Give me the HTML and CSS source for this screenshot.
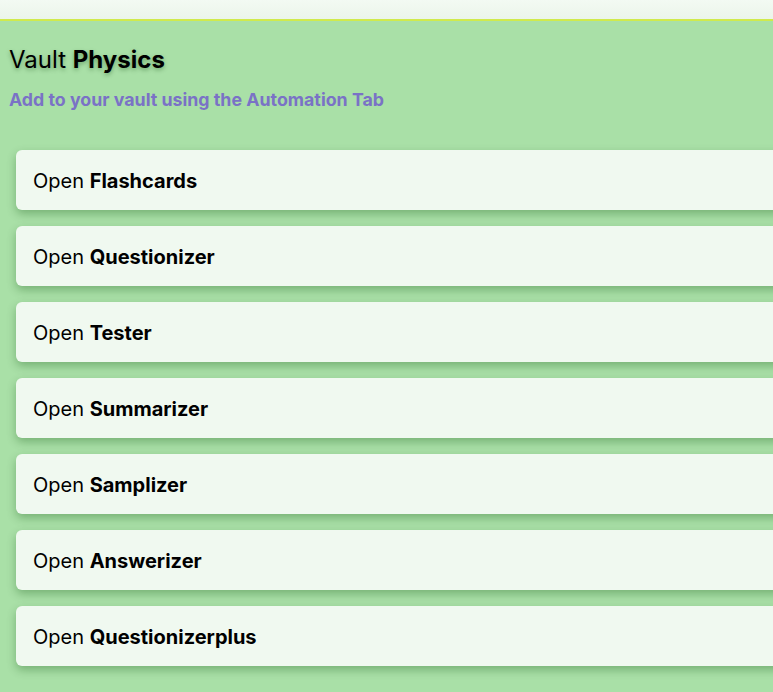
FILE: index.html
```html
<!DOCTYPE html>
<html>
<head>
<meta charset="utf-8">
<link rel="stylesheet" href="styles.css">
</head>
<body>
<div class="topbar"></div>
<main class="content">
  <h1 class="title">Vault <b>Physics</b></h1>
  <p class="subtitle">Add to your vault using the Automation Tab</p>
  <div class="cards">
    <div class="card">Open <b>Flashcards</b></div>
    <div class="card">Open <b>Questionizer</b></div>
    <div class="card">Open <b>Tester</b></div>
    <div class="card">Open <b>Summarizer</b></div>
    <div class="card">Open <b>Samplizer</b></div>
    <div class="card">Open <b>Answerizer</b></div>
    <div class="card">Open <b>Questionizerplus</b></div>
  </div>
</main>
</body>
</html>
```
FILE: styles.css
```css
html, body {
  margin: 0;
  padding: 0;
  overflow: hidden;
  height: 100%;
}
body {
  background: #a9e0a7;
  font-family: Inter, "Noto Sans", sans-serif;
  color: #000;
}
.topbar {
  height: 19px;
  background: linear-gradient(#f3faf3, #ebf5ea);
  border-bottom: 2px solid #d0ea4c;
}
.content {
  padding: 0 0 0 9px;
  overflow: hidden;
}
.title {
  margin: 24px 0 0 0;
  font-size: 24px;
  line-height: 30px;
  font-weight: 400;
  text-shadow: 0 2px 4px rgba(0, 60, 0, 0.35);
}
.title b {
  font-weight: 700;
}
.subtitle {
  margin: 14px 0 0 0;
  font-size: 17.8px;
  line-height: 22px;
  font-weight: 700;
  color: #7a72c6;
}
.cards {
  margin: 39px 0 0 7px;
  display: flex;
  flex-direction: column;
  gap: 16px;
  width: 800px;
  padding-bottom: 20px;
}
.card {
  height: 60px;
  box-sizing: border-box;
  display: flex;
  align-items: center;
  padding-left: 17px;
  padding-top: 2px;
  background: #f0f9f0;
  border-radius: 6px;
  font-size: 20px;
  white-space: pre;
  box-shadow: 0 4px 10px rgba(0, 70, 0, 0.3);
}
.card b {
  font-weight: 700;
}
```
